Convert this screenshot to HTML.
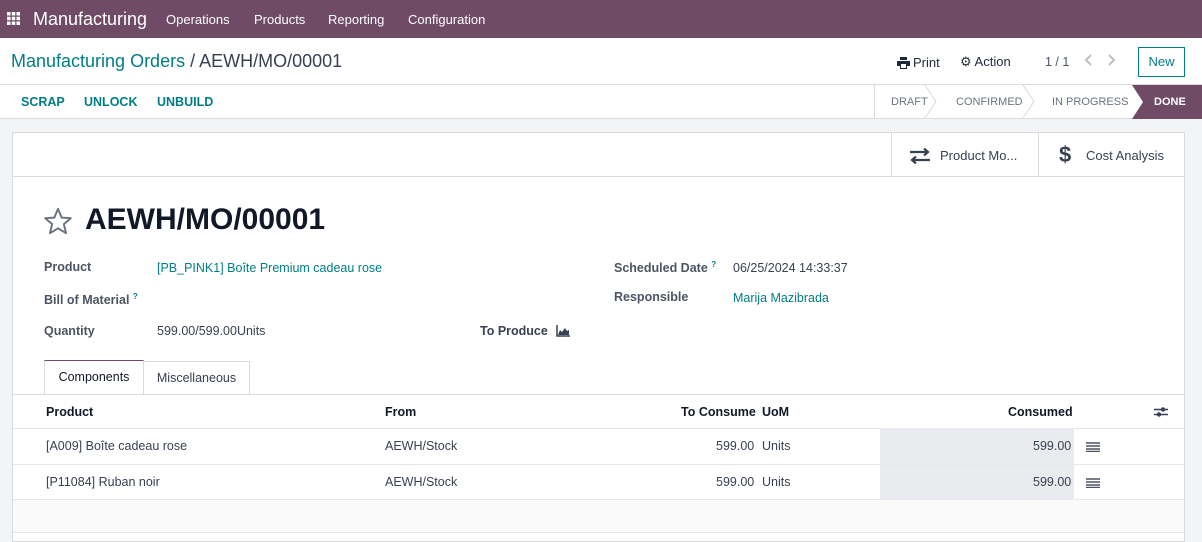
<!DOCTYPE html>
<html><head><meta charset="utf-8"><style>
*{box-sizing:border-box;margin:0;padding:0}
body{width:1202px;height:535px;overflow:hidden;background:#f3f4f6;font-family:"Liberation Sans",sans-serif;font-size:12.5px;color:#374151;position:relative}
.a{position:absolute;white-space:nowrap}
.nav{position:absolute;left:0;top:0;width:1202px;height:38px;background:#6f4b66;color:#fff}
.cp{position:absolute;left:0;top:38px;width:1202px;height:47px;background:#fff;border-bottom:1px solid #d8dadd}
.br{position:absolute;left:0;top:85px;width:1202px;height:34px;background:#fff;border-bottom:1px solid #d8dadd}
.sheet{position:absolute;left:12px;top:132px;width:1173px;height:410px;background:#fff;border:1px solid #d8dadd}
.teal{color:#017e84}
.lbl{color:#4b5563;font-weight:bold;font-size:12.5px}
.b{font-weight:bold}
</style></head><body>
<div class="nav">
 <svg class="a" style="left:7px;top:12px" width="13" height="13" viewBox="0 0 13 13" fill="#fff"><rect x="0" y="0" width="3.5" height="3.5"/><rect x="4.75" y="0" width="3.5" height="3.5"/><rect x="9.5" y="0" width="3.5" height="3.5"/><rect x="0" y="4.75" width="3.5" height="3.5"/><rect x="4.75" y="4.75" width="3.5" height="3.5"/><rect x="9.5" y="4.75" width="3.5" height="3.5"/><rect x="0" y="9.5" width="3.5" height="3.5"/><rect x="4.75" y="9.5" width="3.5" height="3.5"/><rect x="9.5" y="9.5" width="3.5" height="3.5"/></svg>
 <div class="a" style="left:33px;top:9px;font-size:18px">Manufacturing</div>
 <div class="a" style="left:166px;top:12px;font-size:13px">Operations</div>
 <div class="a" style="left:254px;top:12px;font-size:13px">Products</div>
 <div class="a" style="left:328px;top:12px;font-size:13px">Reporting</div>
 <div class="a" style="left:408px;top:12px;font-size:13px">Configuration</div>
</div>
<div class="cp">
 <div class="a" style="left:11px;top:13px;font-size:18px"><span class="teal">Manufacturing Orders</span> <span style="color:#374151">/ AEWH/MO/00001</span></div>
 <svg class="a" style="left:897px;top:19px" width="13" height="12"><path d="M3 0H10V3H3Z M0 4H13V9H10V12H3V9H0Z" fill="#1f2937"/><rect x="4" y="7" width="5" height="4" fill="#fff"/></svg>
 <div class="a" style="left:913px;top:17px;color:#1f2937;font-size:13px">Print</div>
 <div class="a" style="left:960px;top:16px;color:#1f2937;font-size:13px">&#9881; Action</div>
 <div class="a" style="left:1045px;top:17px;color:#4b5563">1 / 1</div>
 <svg class="a" style="left:1084px;top:16px" width="32" height="12"><path d="M7 1L2 6 7 11M25 1L30 6 25 11" stroke="#c0c0c0" stroke-width="2" fill="none"/></svg>
 <div class="a" style="left:1138px;top:9px;width:47px;height:30px;border:1px solid #017e84;color:#017e84;text-align:center;line-height:28px;font-size:13px">New</div>
</div>
<div class="br">
 <div class="a b teal" style="left:21px;top:10px;font-size:12.5px">SCRAP</div>
 <div class="a b teal" style="left:84px;top:10px;font-size:12.5px">UNLOCK</div>
 <div class="a b teal" style="left:157px;top:10px;font-size:12.5px">UNBUILD</div>
 <div class="a" style="left:874px;top:0;width:1px;height:33px;background:#d8dadd"></div>
 <svg class="a" style="left:874px;top:0" width="328" height="34"><polyline points="51,0 62,16.5 51,33" fill="none" stroke="#d8dadd"/><polyline points="149,0 160,16.5 149,33" fill="none" stroke="#d8dadd"/><polygon points="258,0 328,0 328,34 258,34 269,17" fill="#6f4b66"/></svg>
 <div class="a" style="left:891px;top:11px;font-size:11px;color:#6b7280">DRAFT</div>
 <div class="a" style="left:956px;top:11px;font-size:11px;color:#6b7280">CONFIRMED</div>
 <div class="a" style="left:1052px;top:11px;font-size:11px;color:#6b7280">IN PROGRESS</div>
 <div class="a b" style="left:1154px;top:11px;font-size:11px;color:#fff">DONE</div>
</div>
<div class="sheet">
 <div class="a" style="left:0;top:43px;width:1171px;height:1px;background:#d8dadd"></div>
 <div class="a" style="left:878px;top:0;width:1px;height:43px;background:#d8dadd"></div>
 <div class="a" style="left:1025px;top:0;width:1px;height:43px;background:#d8dadd"></div>
 <svg class="a" style="left:896px;top:15px" width="22" height="16"><path d="M1 4H19M15 0.5L19 4 15 7.5M21 12H3M7 8.5L3 12 7 15.5" stroke="#374151" stroke-width="2.2" fill="none"/></svg>
 <div class="a" style="left:927px;top:15px;font-size:13px">Product Mo...</div>
 <div class="a" style="left:1046px;top:9px;font-size:22px;color:#374151;font-weight:bold">$</div>
 <div class="a" style="left:1073px;top:15px;font-size:13px">Cost Analysis</div>
 <svg class="a" style="left:30px;top:74px" width="30" height="28" viewBox="0 0 24 23"><path d="M12 1.5L15 8.7 22.5 9.2 16.8 14.1 18.6 21.5 12 17.5 5.4 21.5 7.2 14.1 1.5 9.2 9 8.7Z" fill="none" stroke="#6b7280" stroke-width="1.6" stroke-linejoin="round"/></svg>
 <div class="a b" style="left:72px;top:70px;font-size:30px;color:#111827">AEWH/MO/00001</div>
 <div class="a lbl" style="left:31px;top:127px">Product</div>
 <div class="a teal" style="left:144px;top:128px">[PB_PINK1] Boîte Premium cadeau rose</div>
 <div class="a lbl" style="left:31px;top:159px">Bill of Material <sup class="teal" style="font-size:8px">?</sup></div>
 <div class="a lbl" style="left:31px;top:191px">Quantity</div>
 <div class="a" style="left:144px;top:191px">599.00/599.00Units</div>
 <div class="a lbl" style="left:467px;top:191px;color:#374151">To Produce</div>
 <svg class="a" style="left:543px;top:192px" width="15" height="12"><path d="M1 0V11H14" stroke="#374151" fill="none" stroke-width="1.5"/><path d="M2 10L4 5 6 7 9 3 11 6 13 5 13 10Z" fill="#374151"/></svg>
 <div class="a lbl" style="left:601px;top:127px">Scheduled Date <sup class="teal" style="font-size:8px">?</sup></div>
 <div class="a" style="left:720px;top:128px">06/25/2024 14:33:37</div>
 <div class="a lbl" style="left:601px;top:157px">Responsible</div>
 <div class="a teal" style="left:720px;top:158px">Marija Mazibrada</div>
 <div class="a" style="left:31px;top:227px;width:100px;height:35px;border:1px solid #d8dadd;border-top:1px solid #6f4b66;border-bottom:none;background:#fff;text-align:center;line-height:33px;color:#111827">Components</div>
 <div class="a" style="left:131px;top:228px;width:106px;height:33px;border:1px solid #d8dadd;border-left:none;border-bottom:none;text-align:center;line-height:33px">Miscellaneous</div>
 <div class="a" style="left:0;top:261px;width:1171px;height:1px;background:#d8dadd"></div>
 <div class="a b" style="left:33px;top:272px;color:#111827">Product</div>
 <div class="a b" style="left:372px;top:272px;color:#111827">From</div>
 <div class="a b" style="left:668px;top:272px;color:#111827">To Consume</div>
 <div class="a b" style="left:749px;top:272px;color:#111827">UoM</div>
 <div class="a b" style="left:995px;top:272px;color:#111827">Consumed</div>
 <svg class="a" style="left:1141px;top:273px" width="14" height="12"><path d="M0 3.5H14M0 8.5H14" stroke="#374151" stroke-width="1.5"/><circle cx="9" cy="3.5" r="2.2" fill="#374151"/><circle cx="5" cy="8.5" r="2.2" fill="#374151"/></svg>
 <div class="a" style="left:0;top:295px;width:1171px;height:1px;background:#e5e7eb"></div>
 <div class="a" style="left:867px;top:296px;width:194px;height:70px;background:#e9ebee"></div>
 <div class="a" style="left:0;top:331px;width:1171px;height:1px;background:#e5e7eb"></div>
 <div class="a" style="left:0;top:366px;width:1171px;height:34px;background:#fafafa;border-top:1px solid #e5e7eb;border-bottom:1px solid #e5e7eb"></div>
 <div class="a" style="left:33px;top:306px">[A009] Boîte cadeau rose</div>
 <div class="a" style="left:372px;top:306px">AEWH/Stock</div>
 <div class="a" style="left:703px;top:306px">599.00</div>
 <div class="a" style="left:749px;top:306px">Units</div>
 <div class="a" style="left:1020px;top:306px">599.00</div>
 <div class="a" style="left:33px;top:342px">[P11084] Ruban noir</div>
 <div class="a" style="left:372px;top:342px">AEWH/Stock</div>
 <div class="a" style="left:703px;top:342px">599.00</div>
 <div class="a" style="left:749px;top:342px">Units</div>
 <div class="a" style="left:1020px;top:342px">599.00</div>
 <svg class="a" style="left:1073px;top:309px" width="14" height="10"><path d="M0 1H14M0 4H14M0 7H14M0 9.5H14" stroke="#4b5563" stroke-width="1.5"/></svg>
 <svg class="a" style="left:1073px;top:345px" width="14" height="10"><path d="M0 1H14M0 4H14M0 7H14M0 9.5H14" stroke="#4b5563" stroke-width="1.5"/></svg>
</div>
</body></html>
